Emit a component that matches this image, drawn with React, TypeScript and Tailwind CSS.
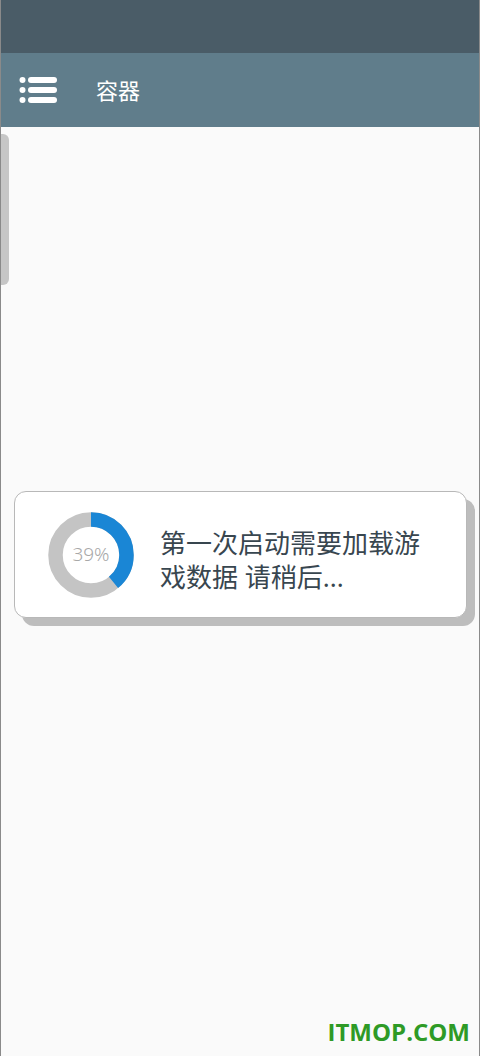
import React from "react";

export default function App() {
  const r = 35.5;
  const c = 2 * Math.PI * r;
  const pct = 0.39;
  return (
    <div
      className="w-[480px] h-[1056px] bg-[#fafafa] border-l border-r border-[#8a8a8a] flex flex-col overflow-hidden"
      style={{ fontFamily: '"Noto Sans", "Noto Sans CJK SC", sans-serif' }}
    >
      <div className="h-[53px] bg-[#4a5c67] shrink-0" />
      <div className="h-[74px] bg-[#607d8b] shrink-0 flex items-center pl-[18px]">
        <svg width="38" height="28" viewBox="0 0 38 28">
          <circle cx="3.5" cy="4" r="3" fill="#fff" />
          <circle cx="3.5" cy="14" r="3" fill="#fff" />
          <circle cx="3.5" cy="24" r="3" fill="#fff" />
          <rect x="9" y="1" width="29" height="6" rx="3" fill="#fff" />
          <rect x="9" y="11" width="29" height="6" rx="3" fill="#fff" />
          <rect x="9" y="21" width="29" height="6" rx="3" fill="#fff" />
        </svg>
        <span className="ml-[39px] text-white text-[22px] leading-none">容器</span>
      </div>
      <div className="relative flex-1 flex flex-col">
        <div className="absolute left-0 top-[7px] w-[8px] h-[151px] bg-[#c6c6c6] rounded-r-[6px]" />
        <div className="mt-[364px] ml-[13px] relative w-[453px] h-[127px]">
          <div className="absolute left-[8px] top-[8px] w-[453px] h-[127px] rounded-[12px] bg-[#bdbdbd]" />
          <div className="relative w-full h-full rounded-[12px] bg-white border border-[#b8b8b8] flex items-center">
            <div className="relative ml-[33px] w-[86px] h-[86px] flex items-center justify-center">
              <svg width="86" height="86" viewBox="0 0 86 86" className="absolute inset-0">
                <circle cx="43" cy="43" r={r} fill="none" stroke="#c4c4c4" strokeWidth="14.5" />
                <circle
                  cx="43"
                  cy="43"
                  r={r}
                  fill="none"
                  stroke="#1a86d5"
                  strokeWidth="14.5"
                  strokeDasharray={`${c * pct} ${c}`}
                  transform="rotate(-90 43 43)"
                />
              </svg>
              <span className="relative text-[#a8a8a8] text-[19px] font-light leading-none">39%</span>
            </div>
            <div className="ml-[26px] text-[26px] leading-[34px] text-[#38464f] w-[280px] mt-[10px]">
              第一次启动需要加载游戏数据 请稍后...
            </div>
          </div>
        </div>
        <div className="flex-1" />
        <div
          className="self-end mr-[9px] mb-[12px] text-[#2e9a26] text-[24px] font-bold leading-none"
          style={{ fontFamily: '"Open Sans", "Liberation Sans", sans-serif' }}
        >
          ITMOP.COM
        </div>
      </div>
    </div>
  );
}
